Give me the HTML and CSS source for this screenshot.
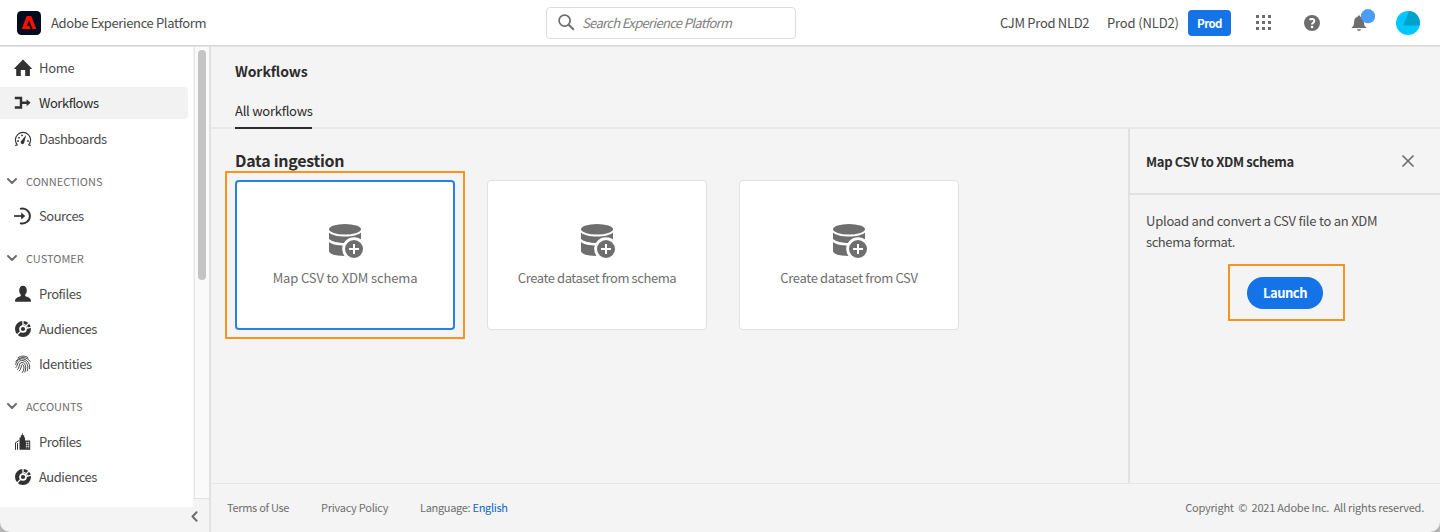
FILE: index.html
```html
<!DOCTYPE html>
<html lang="en">
<head>
<meta charset="utf-8">
<title>Workflows</title>
<link rel="stylesheet" href="styles.css">
</head>
<body>
<svg class="defs" aria-hidden="true">
  <symbol id="chevron" viewBox="0 0 10 6"><path d="M1 1l4 4 4-4" fill="none" stroke="#6e6e6e" stroke-width="2" stroke-linecap="round" stroke-linejoin="round"/></symbol>
  <symbol id="audience" viewBox="0 0 18 18">
    <circle cx="9" cy="9" r="5.9" fill="none" stroke="#323232" stroke-width="4.2"/>
    <path d="M9 7V0M10.6 7.4L16 2M11 8.6l7-1.4M7.4 10.6L2.5 15.5" stroke="#fff" stroke-width="1.3" fill="none"/>
    <path d="M9.6 4.2A5 5 0 0 1 13.8 8.4" stroke="#fff" stroke-width="1" fill="none"/>
    <circle cx="9" cy="9" r="2.1" fill="#323232"/>
  </symbol>
  <symbol id="dataset" viewBox="0 0 36 36">
    <ellipse cx="17" cy="6.2" rx="16" ry="5.2"/>
    <path d="M1 9.6c2.6 2.5 8.400 4 16 4s13.400-1.500 16-4v6.300c-2.600 2.400-8.400 4-16 4s-13.400-1.600-16-4z"/>
    <path d="M1 19c2.600 2.300 8.400 3.600 16 3.600v10.400C8 33 1 31 1 28z"/>
    <circle cx="26" cy="26" r="11.800" fill="#fff"/>
    <circle cx="26" cy="26" r="9"/>
    <path d="M26 21v10M21 26h10" stroke="#fff" stroke-width="2"/>
  </symbol>
</svg>
<div class="app">
  <header class="header">
    <div class="brand">
      <svg class="logo" viewBox="0 0 24 24"><rect width="24" height="24" rx="4.500" fill="#000b1d"/><path d="M9.700 5h4.600L19.300 18h-3.700l-3.600-8.800-2.200 5.500h2.700l1.200 3.300H4.700z" fill="#fa0f00"/></svg>
      <span class="brand-name">Adobe Experience Platform</span>
    </div>
    <div class="search">
      <svg class="search-icon" viewBox="0 0 17 17"><circle cx="6.600" cy="6.600" r="5.500" fill="none" stroke="#6e6e6e" stroke-width="1.700"/><path d="M10.700 10.700l4.600 4.600" stroke="#6e6e6e" stroke-width="2" stroke-linecap="round"/></svg>
      <span class="search-text">Search Experience Platform</span>
    </div>
    <div class="tools">
      <span class="org">CJM Prod NLD2</span>
      <span class="sandbox">Prod (NLD2)</span>
      <span class="badge">Prod</span>
      <svg class="apps" viewBox="0 0 15 15" fill="#6e6e6e"><path d="M0 0h3v3H0zM6 0h3v3H6zM12 0h3v3h-3zM0 6h3v3H0zM6 6h3v3H6zM12 6h3v3h-3zM0 12h3v3H0zM6 12h3v3H6zM12 12h3v3h-3z"/></svg>
      <svg class="help" viewBox="0 0 16 16"><circle cx="8" cy="8" r="8" fill="#6e6e6e"/><path d="M5.500 4.800C7.400 3.300 10.400 3.700 10.300 6c0 1.600-2.300 1.800-2.300 3.600" fill="none" stroke="#fff" stroke-width="2"/><circle cx="8" cy="12" r="1.300" fill="#fff"/></svg>
      <svg class="bell" viewBox="0 0 24 24"><path d="M8 6.600c.9 0 1.300.4 1.300 1.200 2.700.6 3.700 3 3.700 5.600 0 2.800.5 3.600 2.200 4.900v.8H.8v-.8C2.500 17 3 16.200 3 13.400c0-2.600 1-5 3.700-5.600 0-.8.4-1.200 1.300-1.200zM6 20.300h4c0 2-4 2-4 0z" fill="#6e6e6e"/><circle cx="17" cy="7.200" r="7.100" fill="#4b9cf5"/></svg>
      <svg class="avatar" viewBox="0 0 24 24"><circle cx="12" cy="12" r="12" fill="#00c8ff"/><path d="M13.500 .1A12 12 0 0 1 23.700 14.500L7 14.500 12.700 1z" fill="#00a2cc"/></svg>
    </div>
  </header>
  <div class="body">
    <aside class="sidebar">
      <nav class="nav">
        <div class="item"><svg class="icon" viewBox="0 0 18 18"><path d="M9 .6L.4 9.300c-.3.400-.1.800.4.800H2.200v6.300c0 .3.200.5.500.5h4.100V11h4.400v5.900h4.200c.3 0 .5-.2.500-.5v-6.300h1.400c.5 0 .7-.4.300-.8z" fill="#323232"/></svg><span class="home">Home</span></div>
        <div class="item selected"><svg class="icon" viewBox="0 0 18 18"><path d="M.8 4H7v9.500H.8M7 8.800h7" fill="none" stroke="#323232" stroke-width="2.400"/><path d="M12.600 5.300v7l4-3.500z" fill="#323232"/></svg><span>Workflows</span></div>
        <div class="item"><svg class="icon" viewBox="0 0 18 18"><path d="M3.500 15.200A7.600 7.600 0 1 1 14.500 15.200M.9 15.300h2.700M14.400 15.300h2.700" fill="none" stroke="#323232" stroke-width="1.100"/><path d="M12.200 4.800l-4.700 6a1.800 1.800 0 1 0 2.700 2z" fill="#323232"/><g fill="#323232"><circle cx="4" cy="11" r=".9"/><circle cx="5" cy="7.700" r=".9"/><circle cx="8" cy="5.400" r=".9"/><circle cx="14" cy="11" r=".9"/></g></svg><span>Dashboards</span></div>
        <div class="section"><svg class="chev"><use href="#chevron"/></svg><span>CONNECTIONS</span></div>
        <div class="item"><svg class="icon" viewBox="0 0 18 18"><path d="M6 1.900A7.500 7.500 0 1 1 6 16.100" fill="none" stroke="#323232" stroke-width="1.900"/><path d="M0 9h9" stroke="#323232" stroke-width="1.700"/><path d="M7.200 5.400V12.600L11.300 9z" fill="#323232"/></svg><span>Sources</span></div>
        <div class="section"><svg class="chev"><use href="#chevron"/></svg><span>CUSTOMER</span></div>
        <div class="item"><svg class="icon" viewBox="0 0 18 18"><path d="M11.200 10.600v-.9c1-1.100 1.600-2.600 1.600-4.200C12.800 2.700 11.300.8 9 .8S5.200 2.700 5.200 5.500c0 1.600.6 3.100 1.600 4.200v.9c0 .4-.2.700-.7.800C3.400 11.800 1 13.300 1 15.700v.6c0 .3.200.5.500.5h15c.3 0 .5-.2.500-.5v-.6c0-2.400-2.400-3.900-5.100-4.300-.5-.1-.7-.4-.7-.8z" fill="#323232"/></svg><span>Profiles</span></div>
        <div class="item"><svg class="icon"><use href="#audience"/></svg><span>Audiences</span></div>
        <div class="item"><svg class="icon" viewBox="0 0 18 18"><g fill="none" stroke="#323232" stroke-width=".9" stroke-linecap="round"><path d="M4 2.700C7 .5 11 .5 14 2.700M2 6.300c3-5 11-5 14 0M1.700 9.500C2 3.500 9 2.400 12.700 5.600c2.700 2.300 3.500 5.200 2.800 8.100M2 12.500c1.500-1.300 1.200-3.300 1.800-4.500 1.700-3.200 6-3.200 8.300-.6 2.100 2.500 2.100 5 1.200 8.400M3.500 14.500C5.600 12.600 5 10.700 5.700 9c.9-2 3.700-1.900 5-.1 1.500 2.200 1.200 5.200.2 8.200M5.200 16c2.100-2.200 1.800-4 2.200-5.500.4-1.200 1.700-1 2.200.1.800 2 .2 4.500-1.100 6.800"/></g></svg><span>Identities</span></div>
        <div class="section"><svg class="chev"><use href="#chevron"/></svg><span>ACCOUNTS</span></div>
        <div class="item"><svg class="icon" viewBox="0 0 18 18"><path d="M5.500 16.800V4.400h1.300V2.300h1.300V.2h.8v2.100h1.300v2.100h.8v3h5.200v9.400z" fill="#323232"/><path d="M1.500 16.800V9.700l3.500-2.200M3.500 16.800V10" fill="none" stroke="#323232" stroke-width="1"/><path d="M11.800 9.500h3.600M11.800 11.500h3.600M11.800 13.500h3.600M12.600 8.500v7M14.600 8.500v7" stroke="#fff" stroke-width=".5"/></svg><span>Profiles</span></div>
        <div class="item"><svg class="icon"><use href="#audience"/></svg><span>Audiences</span></div>
      </nav>
      <div class="track"><div class="thumb"></div></div>
      <div class="collapse"><svg class="collapse-icon" viewBox="0 0 7 11"><path d="M5.600 1.200L1.500 5.500l4.100 4.300" fill="none" stroke="#6e6e6e" stroke-width="2" stroke-linecap="round" stroke-linejoin="round"/></svg></div>
    </aside>
    <div class="main">
      <h1 class="title">Workflows</h1>
      <div class="tabs"><span class="tab">All workflows</span></div>
      <div class="content">
        <section class="workspace">
          <h2 class="group">Data ingestion</h2>
          <div class="cards">
            <div class="card active"><svg class="card-icon"><use href="#dataset"/></svg><span class="c1">Map CSV to XDM schema</span><i class="mark card-mark"></i></div>
            <div class="card"><svg class="card-icon"><use href="#dataset"/></svg><span class="c2">Create dataset from schema</span></div>
            <div class="card"><svg class="card-icon"><use href="#dataset"/></svg><span class="c3">Create dataset from CSV</span></div>
          </div>
        </section>
        <aside class="panel">
          <div class="panel-head"><h3 class="panel-title">Map CSV to XDM schema</h3><svg class="close" viewBox="0 0 12 12"><path d="M1 1l10 10M11 1L1 11" stroke="#6e6e6e" stroke-width="1.700" stroke-linecap="round"/></svg></div>
          <p class="desc">Upload and convert a CSV file to an XDM<br><span class="desc2">schema format.</span></p>
          <div class="action"><button class="launch">Launch</button><i class="mark launch-mark"></i></div>
        </aside>
      </div>
      <footer class="footer">
        <span class="f1">Terms of Use</span><span class="f2">Privacy Policy</span><span class="f3">Language: <a class="link">English</a></span>
        <span class="copy">Copyright&nbsp; ©&nbsp; 2021 Adobe Inc.&nbsp; All rights reserved.</span>
      </footer>
    </div>
  </div>
</div>
</body>
</html>
```
FILE: styles.css
```css
* { box-sizing: border-box; }
body { margin: 0; background: #b5b5b5; font-family: "Noto Sans CJK SC", "Noto Sans", sans-serif; font-size: 13px; color: #4b4b4b; }
h1, h2, h3, p { margin: 0; }
span, h1, h2, h3 { white-space: nowrap; }
svg { display: block; flex: none; }
.defs { display: none; }
.app { width: 1440px; height: 532px; display: flex; flex-direction: column; background: #f4f4f4; border-radius: 0 0 10px 10px; overflow: hidden; }

.header { height: 46px; flex: none; display: grid; grid-template-columns: 546px 250px 1fr; align-items: center; background: #fff; border-bottom: 1px solid #d3d3d3; box-shadow: 0 1px 0 #e6e6e6; z-index: 1; }
.brand { display: flex; align-items: center; gap: 10px; padding-left: 17px; }
.brand-name { letter-spacing: -.36px; }
.logo { width: 24px; height: 24px; }
.search { height: 32px; display: flex; align-items: center; gap: 7px; padding-left: 11px; border: 1px solid #dcdcdc; border-radius: 4px; }
.search-icon { width: 17px; height: 17px; }
.search-text { font-style: italic; color: #808080; letter-spacing: -.66px; padding-bottom: 1px; }
.tools { display: flex; align-items: center; padding-left: 204px; }
.org { width: 107px; letter-spacing: -.3px; }
.sandbox { width: 81px; letter-spacing: -.15px; }
.badge { width: 43px; height: 26px; line-height: 26px; text-align: center; background: #1473e6; color: #fff; font-weight: bold; font-size: 11.500px; letter-spacing: -.6px; border-radius: 4px; }
.apps { width: 15px; height: 15px; margin-left: 25px; }
.help { width: 16px; height: 16px; margin-left: 33px; }
.bell { width: 24px; height: 24px; margin: -4px 0 0 31px; }
.avatar { width: 24px; height: 24px; margin-left: 21px; }

.body { flex: 1; display: flex; min-height: 0; }
.sidebar { width: 211px; flex: none; display: grid; grid-template-columns: 194px 15px; grid-template-rows: 453px 8px 25px; border-right: 2px solid #e1e1e1; }
.nav { grid-row: 1 / 3; width: 193px; background: #fff; padding-top: 6px; }
.item, .section { display: flex; align-items: center; height: 32px; margin-bottom: 3.400px; line-height: 20px; }
.item { width: 188px; padding-left: 14px; gap: 7px; letter-spacing: -.47px; }
.home { letter-spacing: -.3px; }
.selected { background: #f2f2f2; border-radius: 0 4px 4px 0; color: #2c2c2c; }
.icon { width: 18px; height: 18px; }
.section { margin-top: 10px; padding-left: 7px; gap: 9px; font-size: 11px; color: #6e6e6e; letter-spacing: 0; }
.chev { width: 10px; height: 6px; }
.track { padding: 4px 0 0 3px; border-left: 1px solid #e6e6e6; border-bottom: 1px solid #e1e1e1; background: #fafafa; }
.thumb { width: 8px; height: 230px; border-radius: 4px; background: #c4c4c4; }
.collapse { grid-column: 1 / 3; grid-row: 3; padding: 4px 0 0 191px; }
.collapse-icon { width: 7px; height: 11px; }

.main { flex: 1; display: flex; flex-direction: column; min-width: 0; }
.title { padding-left: 24px; height: 51px; line-height: 51px; font-size: 14px; color: #2c2c2c; letter-spacing: -.1px; }
.tabs { height: 32px; padding-left: 24px; border-bottom: 2px solid #e8e8e8; display: flex; }
.tab { width: 77px; height: 32px; line-height: 27px; border-bottom: 2px solid #2c2c2c; color: #2c2c2c; letter-spacing: -.25px; }
.content { flex: 1; display: flex; min-height: 0; }
.workspace { flex: 1; padding: 19px 0 0 24px; }
.group { height: 32px; line-height: 24px; font-size: 16px; color: #2c2c2c; letter-spacing: -.27px; }
.cards { display: flex; gap: 32px; }
.card { position: relative; width: 220px; height: 150px; display: flex; flex-direction: column; align-items: center; padding-top: 42px; gap: 7px; background: #fff; border: 1px solid #e1e1e1; border-radius: 4px; line-height: 24px; color: #6e6e6e; }
.active { border: 2px solid #2680eb; padding-top: 41px; }
.card-icon { width: 36px; height: 36px; margin-left: 2px; fill: #6e6e6e; }
.c1 { letter-spacing: -.13px; }
.c2 { letter-spacing: -.42px; }
.c3 { letter-spacing: -.35px; }
.mark { position: absolute; border: 2px solid #f7941d; pointer-events: none; }
.card-mark { left: -12px; top: -11px; width: 240px; height: 168px; }
.panel { width: 312px; border-left: 2px solid #e1e1e1; }
.panel-head { height: 66px; display: flex; align-items: center; justify-content: space-between; padding: 0 26px 0 16px; border-bottom: 2px solid #e1e1e1; }
.panel-title { font-size: 13px; color: #2c2c2c; letter-spacing: -.32px; }
.close { width: 12px; height: 12px; }
.desc { padding: 15px 0 0 16px; line-height: 21px; letter-spacing: -.24px; }
.desc2 { letter-spacing: -.42px; }
.action { position: relative; width: 76px; margin: 25px 0 0 117px; }
.launch { display: block; width: 76px; height: 32px; padding: 0 0 1px; border: 0; border-radius: 16px; background: #1473e6; color: #fff; font: bold 13px/31px "Noto Sans CJK SC", "Noto Sans", sans-serif; letter-spacing: -.5px; }
.launch-mark { left: -19px; top: -13px; width: 117px; height: 57px; }
.footer { height: 49px; display: flex; align-items: center; padding: 0 16px 2px; border-top: 1px solid #e6e6e6; font-size: 11px; color: #6e6e6e; }
.f1 { width: 94px; letter-spacing: -.3px; }
.f2 { width: 99px; letter-spacing: -.25px; }
.f3 { letter-spacing: -.31px; }
.link { color: #0d66d0; }
.copy { margin-left: auto; letter-spacing: -.23px; }
```
